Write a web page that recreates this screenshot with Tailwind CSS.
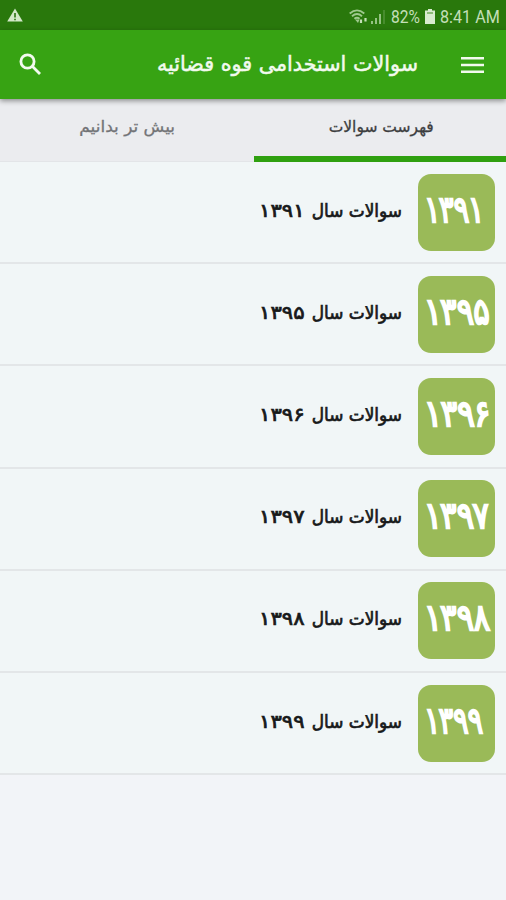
<!DOCTYPE html>
<html lang="fa">
<head>
    <meta charset="UTF-8">
    <meta name="viewport" content="width=device-width, initial-scale=1.0">
    <title>سوالات استخدامی قوه قضائیه</title>
    <script src="https://cdn.jsdelivr.net/npm/@tailwindcss/browser@4"></script>
</head>
<body class="bg-[#f2f4f8] min-h-screen overflow-hidden font-['DejaVu_Sans',sans-serif]">
    <!-- Status bar -->
    <div class="h-[30px] bg-[#29780c] flex items-center justify-between pl-[7px] pr-[6px] text-[#c4dfb8]">
        <svg class="w-4 h-[14px]" viewBox="0 0 16 14">
            <path d="M8 0.5L15.8 13.5H0.2Z" fill="#d3e8c9"/>
            <path d="M8 5v4.5M8 10.7v1.5" stroke="#4b8a34" stroke-width="2"/>
        </svg>
        <div class="flex items-center pt-[3px] font-[Roboto,sans-serif] text-[19px] leading-none">
            <svg class="w-[19px] h-[15px]" viewBox="0 0 19 15" fill="none" stroke="#9fc98e" stroke-width="1.8">
                <path d="M0.7 4.500Q8 -1.800 15.300 4.500M3 7.200Q8 2.800 13 7.200M5.400 9.800Q8 7.600 10.600 9.800"/>
                <path d="M6 10.500L9 14L10.500 10.500Z" fill="#9fc98e" stroke="none"/>
                <path d="M12 10.500v3.500M16.500 9v3.500" stroke="#c4dfb8" stroke-width="2.200"/>
            </svg>
            <svg class="w-[14px] h-[14px] ml-[3px]" viewBox="0 0 14 14" fill="#94c282">
                <path d="M0 11h2v3H0zM4 8h2v6H4zM8 4h2v10H8z"/>
                <path d="M12.500 0h1v14h-1z" fill="#67a04f"/>
            </svg>
            <span class="inline-block w-[29px] ml-[6px]"><span class="inline-block origin-left scale-x-[0.82]">82%</span></span>
            <svg class="w-[10px] h-[15px] ml-[5px]" viewBox="0 0 10 15">
                <path d="M3 0h4v1.500h3V15H0V1.500h3z" fill="#d9ebd0"/>
                <path d="M2 3h6v2H2z" fill="#8dbb79"/>
            </svg>
            <span class="inline-block w-[60px] ml-[5px] whitespace-nowrap"><span class="inline-block origin-left scale-x-[0.85]">8:41 AM</span></span>
        </div>
    </div>

    <!-- App bar -->
    <header class="relative h-[69px] bg-[#37a313] flex items-center justify-between pl-[19px] pr-[22px] shadow-[0_2px_5px_rgba(0,0,0,0.4)]">
        <svg class="w-[23px] h-[23px]" viewBox="0 0 23 23" fill="none" stroke="#f2faee" stroke-width="2.800">
            <circle cx="8.500" cy="8.500" r="6.600"/>
            <path d="M13.300 13.300L21 21"/>
        </svg>
        <div class="flex items-center">
            <h1 dir="rtl" class="w-[262px] mr-[43px] whitespace-nowrap text-[21px] text-[#f2faee] [-webkit-text-stroke:0.5px_#f2faee]"><span class="inline-block origin-right scale-x-[0.985]">سوالات استخدامی قوه قضائیه</span></h1>
            <svg class="w-[23px] h-4" viewBox="0 0 23 16" fill="#f2faee">
                <path d="M0 0h23v2.600H0zM0 6.700h23v2.600H0zM0 13.400h23V16H0z"/>
            </svg>
        </div>
    </header>

    <!-- Tabs -->
    <nav class="h-[63px] bg-[#ebecef] flex text-center text-[16px]">
        <div class="w-[254px] pt-4 text-[#737477] border-b border-[#e3e5e8] [-webkit-text-stroke:0.3px_#737477]" dir="rtl"><span class="inline-block scale-x-[1.06]">بیش تر بدانیم</span></div>
        <div class="w-[252px] pt-4 pl-[3px] text-[#3d3e40] border-b-[6px] border-[#2fa010] [-webkit-text-stroke:0.3px_#3d3e40]" dir="rtl"><span class="inline-block scale-x-[0.97]">فهرست سوالات</span></div>
    </nav>

    <!-- Question lists -->
    <ul id="list" dir="rtl"></ul>

    <script>
        // width: how wide the number is drawn on the tile, in px
        const items = [
            { year: "۱۳۹۱", width: 58 },
            { year: "۱۳۹۵", width: 64 },
            { year: "۱۳۹۶", width: 65 },
            { year: "۱۳۹۷", width: 64 },
            { year: "۱۳۹۸", width: 64 },
            { year: "۱۳۹۹", width: 57 },
        ];
        document.getElementById("list").innerHTML = items.map(({ year, width }) => `
            <li class="h-[102.2px] flex items-center bg-[#f1f6f7] border-b-2 border-[#e3e6e8] pr-[11px]">
                <div class="w-[77px] h-[77px] rounded-[13px] bg-[#9aba58] flex items-center justify-end pl-[7px] text-white" dir="rtl">
                    <span class="inline-block origin-left text-[29px] leading-none -mt-1 [-webkit-text-stroke:1.8px_#fff]" style="transform: scale(${width / 62}, 1.25) skewX(6deg)">${year}</span>
                </div>
                <div class="w-[143px] mr-4 -mt-1 flex justify-between whitespace-nowrap text-[18px] text-[#17191a] [-webkit-text-stroke:0.7px_#17191a]">
                    <span class="inline-block origin-right scale-x-[0.94]">سوالات سال</span>
                    <span class="inline-block origin-left scale-x-[1.18] scale-y-[1.05]">${year}</span>
                </div>
            </li>`).join("");
    </script>
</body>
</html>
